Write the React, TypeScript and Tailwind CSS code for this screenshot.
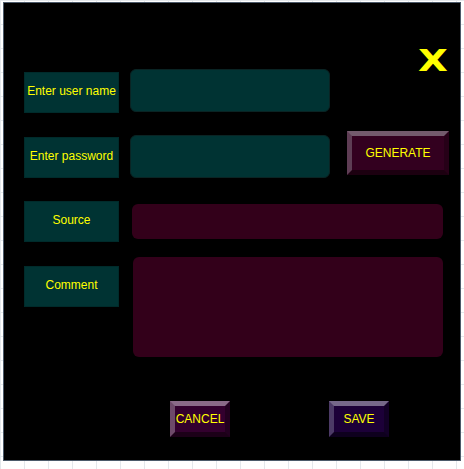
import React from "react";

const font = { fontFamily: '"Liberation Sans", Arial, sans-serif' };

function Label({ text, className = "" }: { text: string; className?: string }) {
  return (
    <div
      className={`w-[95px] h-[41px] shrink-0 flex items-center justify-center pb-[3px] bg-[#003333] border border-[#002b2b] text-[12px] text-[#ffff00] ${className}`}
    >
      {text}
    </div>
  );
}

function BevelButton({
  text,
  className = "",
}: {
  text: string;
  className?: string;
}) {
  return (
    <button
      className={`flex items-center justify-center pb-[1px] border-[5px] text-[12px] text-[#ffff00] ${className}`}
    >
      {text}
    </button>
  );
}

export default function App() {
  return (
    <div
      className="w-[464px] h-[469px] overflow-hidden bg-white bg-[linear-gradient(to_right,#e4e8ec_1px,transparent_1px),linear-gradient(to_bottom,#e4e8ec_1px,transparent_1px)] bg-[size:24px_24px] pt-[2px] pl-[3px]"
      style={font}
    >
      {/* Dialog panel */}
      <div className="relative w-[458px] h-[459px] bg-black border border-[#4c5a6a] pl-[20px] pt-[66px]">
        {/* Close */}
        <div
          className="absolute top-[42px] right-[12px] text-[31px] font-bold leading-none text-[#ffff00] scale-x-[1.25] origin-right"
          style={{ fontFamily: '"DejaVu Sans", sans-serif' }}
        >
          X
        </div>

        {/* User name */}
        <div className="flex items-start h-[43px]">
          <Label text="Enter user name" className="mt-[3px]" />
          <div className="ml-[11px] w-[200px] h-[43px] rounded-[6px] bg-[#003333] border border-[#0a2424]" />
        </div>

        {/* Password */}
        <div className="flex items-start mt-[19px] h-[47px]">
          <Label text="Enter password" className="mt-[6px]" />
          <div className="ml-[11px] mt-[4px] w-[200px] h-[43px] rounded-[6px] bg-[#003333] border border-[#0a2424]" />
          <BevelButton
            text="GENERATE"
            className="ml-[17px] w-[102px] h-[44px] bg-[#33001f] border-t-[#735a6c] border-l-[#5e3d54] border-r-[#260017] border-b-[#1c0010]"
          />
        </div>

        {/* Source */}
        <div className="flex items-start mt-[23px] h-[41px]">
          <Label text="Source" />
          <div className="ml-[13px] mt-[3px] w-[311px] h-[35px] rounded-[6px] bg-[#33001a]" />
        </div>

        {/* Comment */}
        <div className="flex items-start mt-[15px]">
          <Label text="Comment" className="mt-[9px]" />
          <div className="ml-[14px] w-[310px] h-[100px] rounded-[6px] bg-[#33001a]" />
        </div>

        {/* Actions */}
        <div className="flex mt-[44px] pl-[146px]">
          <BevelButton
            text="CANCEL"
            className="w-[60px] h-[36px] bg-[#33002e] border-t-[#8a6a88] border-l-[#6e4a6a] border-r-[#22001f] border-b-[#1c0018]"
          />
          <BevelButton
            text="SAVE"
            className="ml-[99px] w-[60px] h-[36px] bg-[#1c0038] border-t-[#76688a] border-l-[#4c3a66] border-r-[#120026] border-b-[#0e001e]"
          />
        </div>
      </div>
    </div>
  );
}
